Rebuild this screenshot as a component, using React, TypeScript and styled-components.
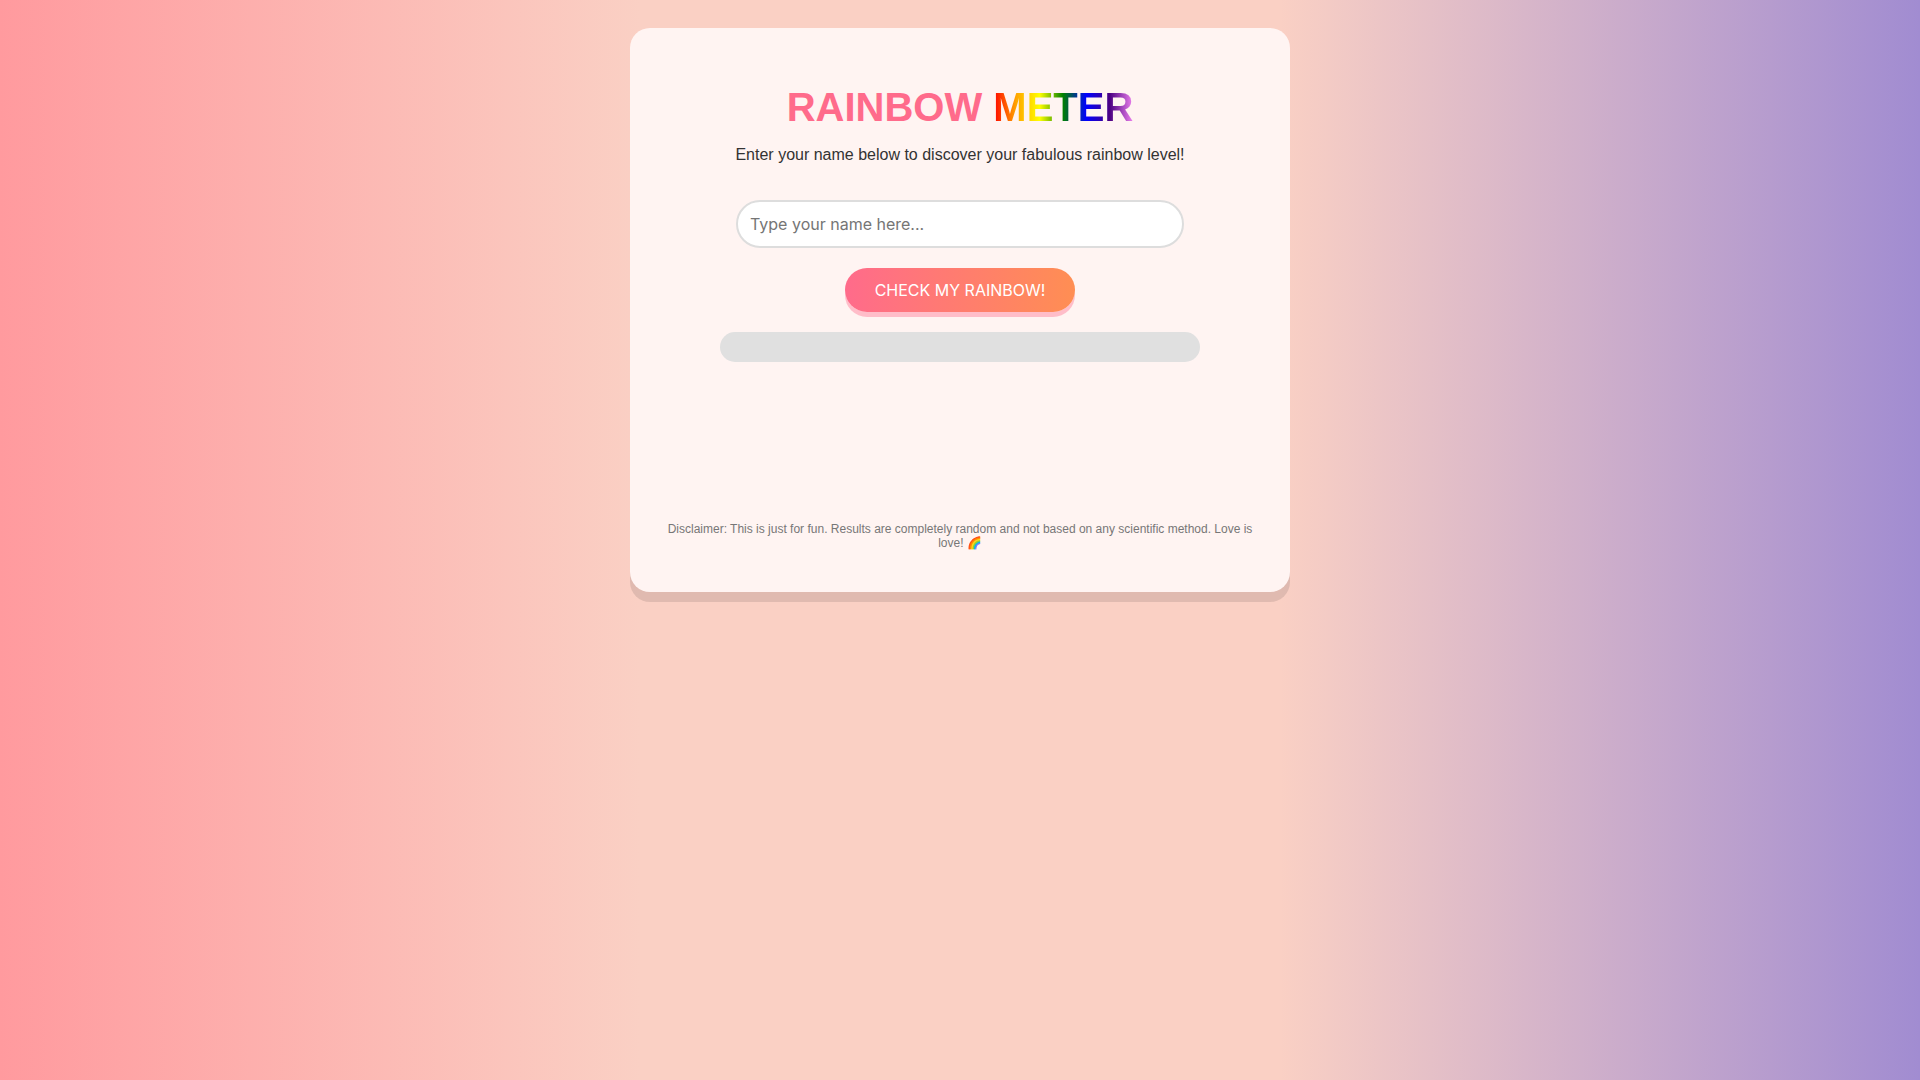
import React, { FormEvent, useState } from "react";
import styled, { createGlobalStyle } from "styled-components";

const GlobalStyle = createGlobalStyle`
  * { box-sizing: border-box; }
  body {
    margin: 0;
    min-height: 100vh;
    font-family: "Liberation Sans", Arial, sans-serif;
    color: #333;
    background: linear-gradient(to right, #ff9a9e, #fad0c4, #fad0c4, #a18cd1);
  }
`;

const Page = styled.div`
  display: flex;
  justify-content: center;
  align-items: flex-start;
  padding: 28px 20px;
`;

const Card = styled.main`
  display: flex;
  flex-direction: column;
  align-items: center;
  width: 100%;
  max-width: 660px;
  padding: 30px;
  border-radius: 20px;
  background: #fff4f2;
  box-shadow: 0 10px 0 rgba(0, 0, 0, 0.1);
  text-align: center;
`;

const Title = styled.h1`
  margin: 26px 0 16px;
  font-size: 40px;
  line-height: 46px;
  color: #ff6b8b;
`;

const Rainbow = styled.span`
  color: transparent;
  background: linear-gradient(to right, red, orange, yellow, green, blue, indigo, violet);
  background-clip: text;
  -webkit-background-clip: text;
`;

const Form = styled.form`
  display: flex;
  flex-direction: column;
  align-items: center;
`;

const Intro = styled.label`
  margin-bottom: 36px;
  font-size: 16px;
  line-height: 18px;
`;

const NameInput = styled.input`
  width: 100%;
  max-width: 448px;
  height: 48px;
  padding: 12px;
  border: 2px solid #ddd;
  border-radius: 25px;
  background: #fff;
  font: 16px Inter, sans-serif;
  text-align: left;
`;

const CheckButton = styled.button`
  margin: 20px 0;
  padding: 12px 30px;
  border: 0;
  border-radius: 25px;
  background: linear-gradient(to right, #ff6b8b, #ff8e53);
  box-shadow: 0 5px 0 rgba(255, 107, 139, 0.4);
  color: #fff;
  font: 16px/20px Inter, sans-serif;
  text-transform: uppercase;
  cursor: pointer;
`;

const Meter = styled.div`
  width: 80%;
  height: 30px;
  border-radius: 15px;
  background: #e0e0e0;
  overflow: hidden;
`;

const MeterFill = styled.div`
  height: 100%;
  background: linear-gradient(to right, red, orange, yellow, green, blue, indigo, violet);
  transition: width 1s;
`;

const Result = styled.output`
  min-height: 100px;
  margin: 30px 0;
  font-size: 24px;
`;

const Disclaimer = styled.footer`
  padding-bottom: 12px;
  font-size: 12px;
  line-height: 14px;
  color: #777;
`;

export default function App() {
  const [name, setName] = useState("");
  const [level, setLevel] = useState(0);

  const check = (event: FormEvent) => {
    event.preventDefault();
    if (name.trim()) setLevel(Math.floor(Math.random() * 100) + 1);
  };

  return (
    <>
      <GlobalStyle />
      <Page>
        <Card>
          <Title>RAINBOW <Rainbow>METER</Rainbow></Title>
          <Form onSubmit={check}>
            <Intro htmlFor="name">Enter your name below to discover your fabulous rainbow level!</Intro>
            <NameInput
              id="name"
              type="text"
              placeholder="Type your name here..."
              value={name}
              onChange={(event) => setName(event.target.value)}
            />
            <CheckButton type="submit">Check my rainbow!</CheckButton>
          </Form>
          <Meter>
            <MeterFill style={{ width: `${level}%` }} />
          </Meter>
          <Result>{level > 0 && `${level}%`}</Result>
          <Disclaimer>
            Disclaimer: This is just for fun. Results are completely random and not based on any
            scientific method. Love is love! 🌈
          </Disclaimer>
        </Card>
      </Page>
    </>
  );
}
